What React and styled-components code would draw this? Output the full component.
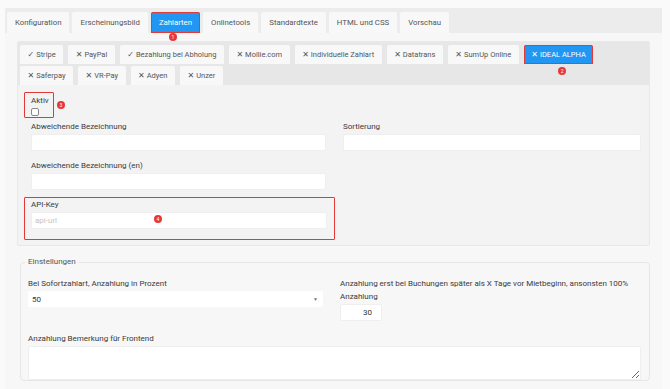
import React from "react";
import styled, { createGlobalStyle } from "styled-components";

const GlobalStyle = createGlobalStyle`
  body {
    margin: 0;
    background: #fafafa;
    font-family: Roboto, "Liberation Sans", sans-serif;
    color: #333;
  }
`;

const Page = styled.div`
  height: 389px;
  box-sizing: border-box;
  padding: 8px 8px 0 5px;
  overflow: hidden;
`;

const Card = styled.div`
  height: 100%;
  background: #f7f7f7;
`;

const TopTabs = styled.div`
  display: flex;
  gap: 3px;
  height: 25px;
  box-sizing: border-box;
  padding: 4px 0 0 2px;
  background: #ececec;
`;

const Tab = styled.div`
  position: relative;
  display: flex;
  align-items: center;
  height: ${(p) => (p.$small ? 19 : 21)}px;
  box-sizing: border-box;
  padding: 0 ${(p) => (p.$small ? 7.5 : 8)}px;
  font-size: ${(p) => (p.$small ? 7.5 : 7.8)}px;
  white-space: nowrap;
  border-radius: 2px 2px 0 0;
  background: ${(p) => (p.$active ? "#2196f3" : "#f8f8f8")};
  color: ${(p) => (p.$active ? "#fff" : "#555")};
  outline: ${(p) => (p.$active ? "1.5px solid #e53935" : "none")};
  outline-offset: -1px;
`;

const Mark = styled.span`
  margin-right: 2px;
  font-family: "DejaVu Sans", sans-serif;
  font-size: 8px;
  font-weight: ${(p) => (p.$cross ? "bold" : "normal")};
`;

const Badge = styled.span`
  position: absolute;
  width: 8px;
  height: 8px;
  border-radius: 50%;
  background: #e53935;
  color: #fff;
  font-size: 5px;
  line-height: 8px;
  text-align: center;
  left: ${(p) => p.$left};
  top: ${(p) => p.$top};
  transform: translate(-50%, -50%);
`;

const Body = styled.div`
  padding: 8px 12px 0 12px;
`;

const Panel = styled.div`
  background: #f3f3f3;
  border: 1px solid #e9e9e9;
  border-radius: 2px;
`;

const InnerTabs = styled.div`
  display: flex;
  flex-direction: column;
  gap: 2px;
  padding: 3px 2px 0;
  background: #e7e7e7;
`;

const TabRow = styled.div`
  display: flex;
  gap: 5px;
`;

const PanelBody = styled.div`
  padding: 7px 8px 5px 13px;
`;

const Row = styled.div`
  display: grid;
  grid-template-columns: 295px 1fr;
  column-gap: 17px;
  margin-bottom: ${(p) => p.$mb ?? 8}px;
`;

const Group = styled.div`
  display: flex;
  flex-direction: column;
`;

const Highlight = styled.div`
  position: relative;
  display: flex;
  flex-direction: column;
  align-items: flex-start;
  box-sizing: border-box;
  margin-left: -7px;
  width: ${(p) => p.$width};
  padding: ${(p) => p.$pad};
  border: 1.5px solid #e53935;
  border-radius: 1px;
`;

const Label = styled.label`
  display: block;
  font-size: 8px;
  line-height: ${(p) => (p.$tight ? 11 : 13)}px;
  margin-bottom: ${(p) => (p.$tight ? 0 : 1)}px;
  color: #3a3a3a;
`;

const Input = styled.input`
  display: block;
  width: ${(p) => p.$width || "100%"};
  height: 17px;
  box-sizing: border-box;
  padding: 0 ${(p) => (p.$right ? "9px" : "3px")} 0 3px;
  border: 1px solid #efefef;
  border-radius: 2px;
  background: #fff;
  font-family: inherit;
  font-size: 8px;
  color: #333;
  text-align: ${(p) => (p.$right ? "right" : "left")};
  outline: none;
  &::placeholder {
    color: #c4c4c4;
  }
`;

const Check = styled.input`
  appearance: none;
  width: 8px;
  height: 8px;
  margin: 2px 0 0;
  border: 1px solid #8a8a8a;
  border-radius: 2px;
  background: #fff;
`;

const Fieldset = styled.fieldset`
  margin: 10px 0 0 3px;
  padding: 9px 8px 0 7px;
  border: 1px solid #e6e6e6;
  border-radius: 4px;
  min-width: 0;
`;

const Legend = styled.legend`
  padding: 0 3px;
  margin-left: -3px;
  font-size: 8px;
  line-height: 12px;
  color: #555;
`;

const Select = styled.div`
  display: flex;
  align-items: center;
  justify-content: space-between;
  height: 16px;
  padding: 0 5px 0 4px;
  border-radius: 2px;
  background: #fff;
  font-size: 8px;
  color: #333;
`;

const Arrow = styled.span`
  font-size: 5px;
  color: #777;
`;

const TextArea = styled.textarea`
  display: block;
  width: 100%;
  height: 34px;
  box-sizing: border-box;
  border: 1px solid #efefef;
  border-radius: 2px;
  background: #fff;
  resize: vertical;
`;

const topTabs = [
  "Konfiguration",
  "Erscheinungsbild",
  "Zahlarten",
  "Onlinetools",
  "Standardtexte",
  "HTML und CSS",
  "Vorschau",
];

const payRows = [
  [
    ["✓", "Stripe"],
    ["✕", "PayPal"],
    ["✓", "Bezahlung bei Abholung"],
    ["✕", "Mollie.com"],
    ["✕", "Individuelle Zahlart"],
    ["✕", "Datatrans"],
    ["✕", "SumUp Online"],
    ["✕", "IDEAL ALPHA", true],
  ],
  [
    ["✕", "Saferpay"],
    ["✕", "VR-Pay"],
    ["✕", "Adyen"],
    ["✕", "Unzer"],
  ],
];

export default function App() {
  return (
    <>
      <GlobalStyle />
      <Page>
        <Card>
          <TopTabs>
            {topTabs.map((t, i) => (
              <Tab key={t} $active={i === 2}>
                {t}
                {i === 2 && (
                  <Badge $left="45%" $top="calc(100% + 4px)">1</Badge>
                )}
              </Tab>
            ))}
          </TopTabs>
          <Body>
            <Panel>
              <InnerTabs>
                {payRows.map((row, r) => (
                  <TabRow key={r}>
                    {row.map(([m, name, active]) => (
                      <Tab key={name} $small $active={active}>
                        <Mark $cross={m === "✕"}>{m}</Mark>
                        {name}
                        {active && (
                          <Badge $left="55%" $top="calc(100% + 7px)">2</Badge>
                        )}
                      </Tab>
                    ))}
                  </TabRow>
                ))}
              </InnerTabs>
              <PanelBody>
                <Row $mb={2}>
                  <Highlight $width="30px" $pad="2px 6px 1px 6px">
                    <Label $tight>Aktiv</Label>
                    <Check type="checkbox" />
                    <Badge $left="calc(100% + 8px)" $top="50%">3</Badge>
                  </Highlight>
                </Row>
                <Row>
                  <Group>
                    <Label>Abweichende Bezeichnung</Label>
                    <Input />
                  </Group>
                  <Group>
                    <Label>Sortierung</Label>
                    <Input />
                  </Group>
                </Row>
                <Row $mb={7}>
                  <Group>
                    <Label>Abweichende Bezeichnung (en)</Label>
                    <Input />
                  </Group>
                </Row>
                <Row $mb={0}>
                  <Highlight $width="311px" $pad="0 7px 10px 6px">
                    <Label>API-Key</Label>
                    <Input placeholder="api-url" />
                    <Badge $left="133px" $top="21px">4</Badge>
                  </Highlight>
                </Row>
              </PanelBody>
            </Panel>
            <Fieldset>
              <Legend>Einstellungen</Legend>
              <Row $mb={11}>
                <Group>
                  <Label>Bei Sofortzahlart, Anzahlung in Prozent</Label>
                  <Select>
                    50
                    <Arrow>▼</Arrow>
                  </Select>
                </Group>
                <Group>
                  <Label>
                    Anzahlung erst bei Buchungen später als X Tage vor
                    Mietbeginn, ansonsten 100% Anzahlung
                  </Label>
                  <Input $width="42px" $right defaultValue="30" />
                </Group>
              </Row>
              <Group>
                <Label>Anzahlung Bemerkung für Frontend</Label>
                <TextArea />
              </Group>
            </Fieldset>
          </Body>
        </Card>
      </Page>
    </>
  );
}
